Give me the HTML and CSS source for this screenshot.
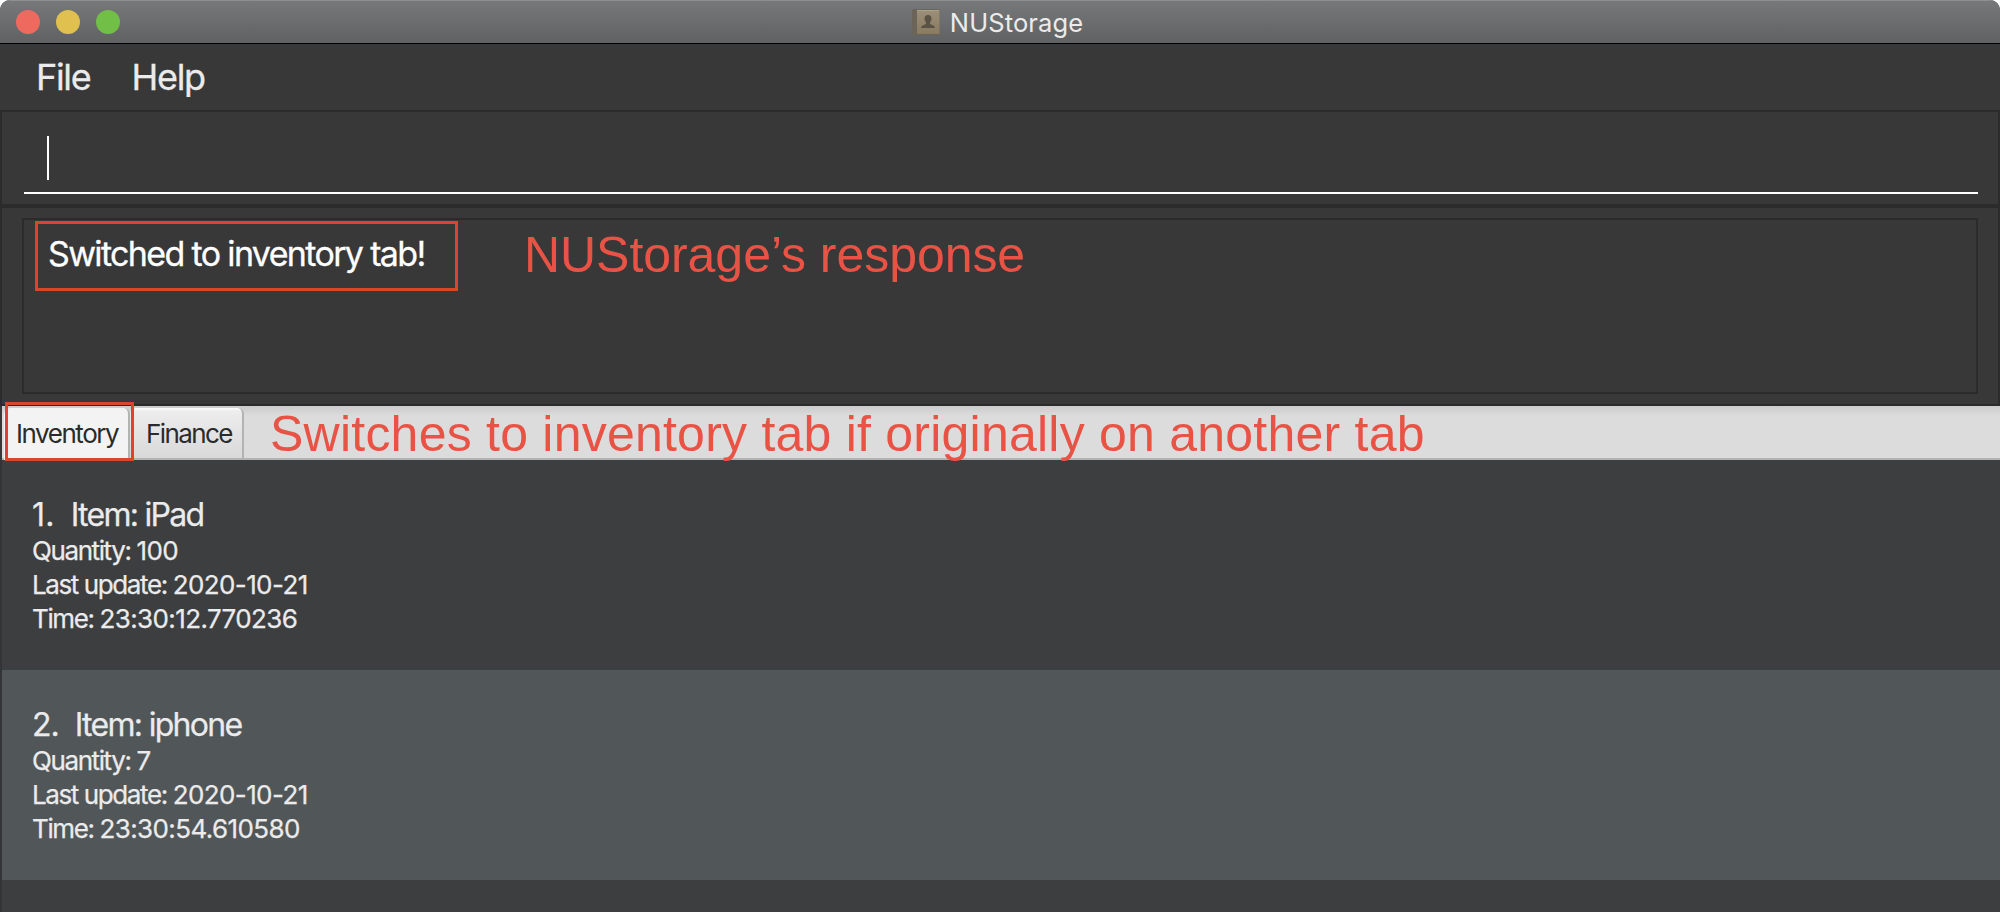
FILE: index.html
```html
<!DOCTYPE html>
<html lang="en">
<head>
<meta charset="utf-8">
<title>NUStorage</title>
<link rel="stylesheet" href="styles.css">
</head>
<body>
<div class="window">
  <header class="titlebar">
    <div class="lights"><span class="light red"></span><span class="light yellow"></span><span class="light green"></span></div>
    <div class="title">
      <svg class="book" width="28" height="26" viewBox="0 0 28 26">
        <defs><linearGradient id="cover" x1="0" y1="0" x2="0" y2="1"><stop offset="0" stop-color="#9c8f78"/><stop offset="1" stop-color="#897b62"/></linearGradient></defs>
        <rect x="0" y="0" width="27.5" height="26" rx="1.5" fill="#6b6459"/>
        <rect x="5" y="1" width="22.500" height="24" rx="1" fill="url(#cover)"/>
        <path d="M5 1.500H27" stroke="#aaa08c"/>
        <path d="M16 6c2.400 0 3.500 1.700 3.500 3.800 0 1.600-.7 2.900-1.500 3.700v1.300c.8 1.200 4.700 1.200 5 4.200H9c.3-3 4.200-3 5-4.200v-1.300c-.8-.8-1.500-2.100-1.500-3.700C12.500 7.700 13.600 6 16 6z" fill="#5a5245"/>
      </svg>
      <span class="title-text">NUStorage</span>
    </div>
  </header>
  <nav class="menubar"><span class="menu">File</span><span class="menu">Help</span></nav>
  <section class="panel command"><div class="field"><span class="caret"></span></div></section>
  <section class="panel response">
    <div class="result"><span class="result-text">Switched to inventory tab!</span></div>
  </section>
  <div class="tabs">
    <div class="tab active"><span class="inventory">Inventory</span></div>
    <div class="tab"><span class="finance">Finance</span></div>
  </div>
  <main class="list">
    <article class="row">
      <h2 class="name"><span class="index narrow">1.</span><span class="item">Item: iPad</span></h2>
      <p class="detail">Quantity: <span class="value">100</span></p>
      <p class="detail">Last update: <span class="value">2020-10-21</span></p>
      <p class="detail">Time: <span class="value">23:30:12.770236</span></p>
    </article>
    <article class="row alt">
      <h2 class="name"><span class="index">2.</span><span class="item">Item: iphone</span></h2>
      <p class="detail">Quantity: <span class="value">7</span></p>
      <p class="detail">Last update: <span class="value">2020-10-21</span></p>
      <p class="detail">Time: <span class="value">23:30:54.610580</span></p>
    </article>
    <article class="row last"></article>
  </main>
  <div class="mark mark-result"></div>
  <div class="mark mark-tab"></div>
  <div class="note note-result">NUStorage’s response</div>
  <div class="note note-tab">Switches to inventory tab if originally on another tab</div>
</div>
</body>
</html>
```
FILE: styles.css
```css
* { box-sizing: border-box; margin: 0; padding: 0; }
body { background: #fff; font-family: Inter, "Liberation Sans", sans-serif; color: #ebebec; }
.window { position: relative; display: flex; flex-direction: column; width: 2000px; height: 912px; overflow: hidden; border-radius: 10px 10px 0 0; background: #383838; white-space: nowrap; }
.titlebar { display: grid; grid-template-columns: 1fr auto 1fr; height: 44px; background: linear-gradient(#77787a, #606162); border-top: 1px solid #8e8f90; border-bottom: 1px solid #000; }
.lights { display: flex; gap: 16px; padding: 9px 0 0 16px; }
.light { width: 24px; height: 24px; border-radius: 50%; }
.red { background: #ee6a5f; }
.yellow { background: #e0c04e; }
.green { background: #72bf47; }
.title { display: flex; gap: 10px; padding-right: 5px; }
.book { margin-top: 8px; }
.title-text { font-size: 25.5px; line-height: 44px; letter-spacing: 0.1px; }
.menubar { display: flex; gap: 41px; height: 66px; padding-left: 36px; font-size: 36px; line-height: 67px; }
.menu { letter-spacing: -1.3px; -webkit-text-stroke: 0.3px; }
.panel { border: 2px solid #2b2b2b; }
.command { height: 96px; padding: 10px 20px 10px 22px; }
.field { height: 72px; padding: 14px 0 0 23px; border-bottom: 2px solid #fff; }
.caret { display: block; width: 2px; height: 44px; background: #fff; }
.response { height: 200px; padding: 10px 20px; }
.result { height: 176px; padding: 14px 0 0 24px; border: 2px solid #2b2b2b; color: #fff; font-size: 34px; line-height: 40px; }
.result-text { letter-spacing: -1.65px; -webkit-text-stroke: 0.3px; }
.tabs { display: flex; height: 54px; margin-left: 2px; padding: 2px 0 0 2px; background: linear-gradient(#cbcbcb, #dcdcdc 10px); border-bottom: 2px solid #b3b3b3; }
.tab { padding: 0 0 0 16px; height: 50px; border: 2px solid #b3b3b3; border-width: 0 2px 0 0; border-radius: 6px 6px 0 0; background: linear-gradient(#fff, #ededed 3px, #d9d9d9); color: #2b2b2b; font-size: 26px; line-height: 52px; }
.active { height: 52px; width: 126px; padding-left: 12px; background: #f3f3f3; }
.tab:last-child { width: 114px; }
.inventory { letter-spacing: -1.45px; }
.finance { letter-spacing: -1.6px; }
.list { flex: 1; border-left: 2px solid #333435; background: #3c3e3f; -webkit-text-stroke: 0.25px; }
.row { height: 210px; padding: 36px 0 0 30px; }
.alt { background: #515658; }
.last { height: 32px; padding: 0; }
.name { display: flex; gap: 16px; font-size: 32px; font-weight: 400; line-height: 38px; letter-spacing: -1.7px; }
.index { letter-spacing: -1px; }
.narrow { letter-spacing: 0.2px; }
.detail { font-size: 26px; line-height: 34px; letter-spacing: -1.4px; }
.value { letter-spacing: -0.6px; }
.mark { position: absolute; border: 3px solid #dc442c; }
.mark-result { left: 35px; top: 221px; width: 423px; height: 70px; }
.mark-tab { left: 5px; top: 402px; width: 129px; height: 59px; }
.note { position: absolute; font-family: "Liberation Sans", Arial, sans-serif; font-size: 50px; line-height: 60px; color: #e95345; }
.note-result { left: 524px; top: 225px; letter-spacing: -0.05px; }
.note-tab { left: 270px; top: 404px; letter-spacing: 0.23px; }
```
